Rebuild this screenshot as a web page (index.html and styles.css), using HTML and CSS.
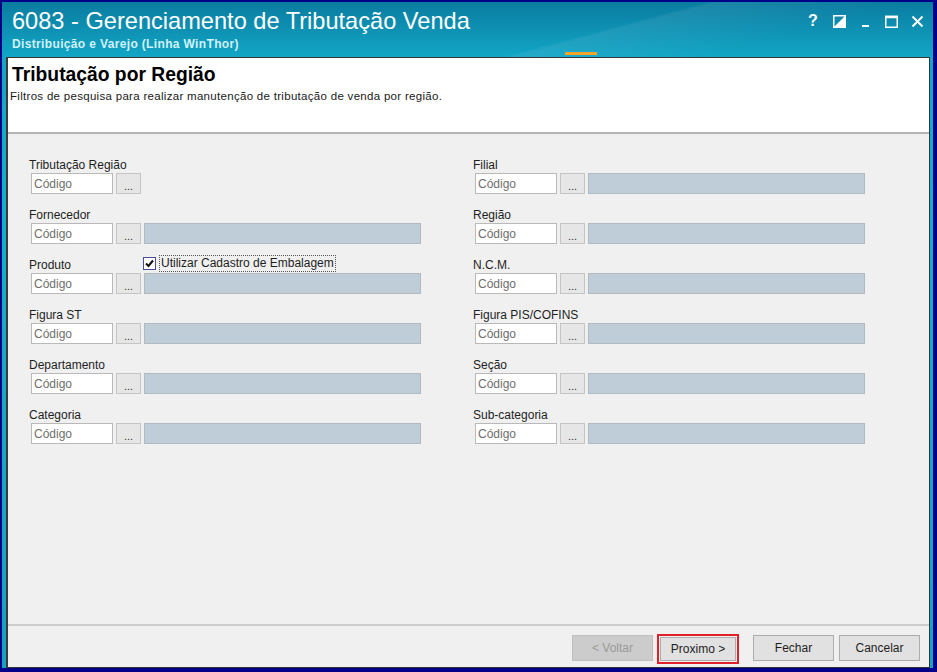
FILE: index.html
```html
<!DOCTYPE html>
<html lang="pt-BR">
<head>
<meta charset="UTF-8">
<meta name="viewport" content="width=device-width, initial-scale=1.0">
<title>6083 - Gerenciamento de Tributação Venda</title>
<link rel="stylesheet" href="styles.css">
</head>
<body>
<div class="window">
  <div class="frame">
    <!-- Title bar -->
    <div class="titlebar">
      <div class="titles">
        <div class="app-title">6083 - Gerenciamento de Tributação Venda</div>
        <div class="app-subtitle">Distribuição e Varejo (Linha WinThor)</div>
      </div>
      <div class="win-controls">
        <span class="ctl ctl-help">?</span>
        <span class="ctl">
          <svg width="13" height="13" viewBox="0 0 13 13">
            <rect x="0.75" y="0.75" width="11.5" height="11.5" fill="none" stroke="#fff" stroke-width="1.5"/>
            <polygon points="12,1 12,12 1,12" fill="#fff"/>
          </svg>
        </span>
        <span class="ctl">
          <svg width="13" height="13" viewBox="0 0 13 13">
            <rect x="3" y="10" width="7" height="2" fill="#fff"/>
          </svg>
        </span>
        <span class="ctl">
          <svg width="13" height="13" viewBox="0 0 13 13">
            <rect x="0.75" y="1.5" width="11.5" height="10.75" fill="none" stroke="#fff" stroke-width="1.5"/>
            <rect x="0" y="0.75" width="13" height="2.5" fill="#fff"/>
          </svg>
        </span>
        <span class="ctl">
          <svg width="13" height="13" viewBox="0 0 13 13">
            <path d="M1.5 1.5 L11.5 11.5 M11.5 1.5 L1.5 11.5" stroke="#fff" stroke-width="2"/>
          </svg>
        </span>
      </div>
      <span class="tab-mark"></span>
    </div>

    <div class="client">
      <!-- Wizard header -->
      <div class="page-header">
        <h1>Tributação por Região</h1>
        <p>Filtros de pesquisa para realizar manutenção de tributação de venda por região.</p>
      </div>

      <!-- Filters -->
      <div class="filters">
        <div class="column">
          <div class="field">
            <label>Tributação Região</label>
            <div class="controls">
              <input class="code" type="text" placeholder="Código">
              <button class="pick">...</button>
            </div>
          </div>
          <div class="field">
            <label>Fornecedor</label>
            <div class="controls">
              <input class="code" type="text" placeholder="Código">
              <button class="pick">...</button>
              <span class="desc"></span>
            </div>
          </div>
          <div class="field">
            <div class="label-row">
              <label class="short">Produto</label>
              <span class="check">
                <svg width="13" height="13" viewBox="0 0 13 13">
                  <rect x="0.5" y="0.5" width="12" height="12" fill="#fff" stroke="#4b4b9a"/>
                  <path d="M3 6.5 L5.5 9 L10 3.5" fill="none" stroke="#111" stroke-width="2"/>
                </svg>
                <span class="check-text">Utilizar Cadastro de Embalagem</span>
              </span>
            </div>
            <div class="controls">
              <input class="code" type="text" placeholder="Código">
              <button class="pick">...</button>
              <span class="desc"></span>
            </div>
          </div>
          <div class="field">
            <label>Figura ST</label>
            <div class="controls">
              <input class="code" type="text" placeholder="Código">
              <button class="pick">...</button>
              <span class="desc"></span>
            </div>
          </div>
          <div class="field">
            <label>Departamento</label>
            <div class="controls">
              <input class="code" type="text" placeholder="Código">
              <button class="pick">...</button>
              <span class="desc"></span>
            </div>
          </div>
          <div class="field">
            <label>Categoria</label>
            <div class="controls">
              <input class="code" type="text" placeholder="Código">
              <button class="pick">...</button>
              <span class="desc"></span>
            </div>
          </div>
        </div>

        <div class="column">
          <div class="field">
            <label>Filial</label>
            <div class="controls">
              <input class="code" type="text" placeholder="Código">
              <button class="pick">...</button>
              <span class="desc"></span>
            </div>
          </div>
          <div class="field">
            <label>Região</label>
            <div class="controls">
              <input class="code" type="text" placeholder="Código">
              <button class="pick">...</button>
              <span class="desc"></span>
            </div>
          </div>
          <div class="field">
            <label>N.C.M.</label>
            <div class="controls">
              <input class="code" type="text" placeholder="Código">
              <button class="pick">...</button>
              <span class="desc"></span>
            </div>
          </div>
          <div class="field">
            <label>Figura PIS/COFINS</label>
            <div class="controls">
              <input class="code" type="text" placeholder="Código">
              <button class="pick">...</button>
              <span class="desc"></span>
            </div>
          </div>
          <div class="field">
            <label>Seção</label>
            <div class="controls">
              <input class="code" type="text" placeholder="Código">
              <button class="pick">...</button>
              <span class="desc"></span>
            </div>
          </div>
          <div class="field">
            <label>Sub-categoria</label>
            <div class="controls">
              <input class="code" type="text" placeholder="Código">
              <button class="pick">...</button>
              <span class="desc"></span>
            </div>
          </div>
        </div>
      </div>

      <!-- Wizard buttons -->
      <div class="footer">
        <button class="btn" disabled>&lt; Voltar</button>
        <span class="highlight"><button class="btn btn-next">Proximo &gt;</button></span>
        <button class="btn btn-close">Fechar</button>
        <button class="btn">Cancelar</button>
      </div>
    </div>
  </div>
</div>
</body>
</html>
```

FILE: styles.css
```css
html, body {
    margin: 0;
    padding: 0;
    overflow: hidden;
}

body {
    font-family: "Liberation Sans", Arial, sans-serif;
    font-size: 12px;
    color: #1e1e1e;
}

.window {
    width: 937px;
    height: 672px;
    box-sizing: border-box;
    background: #000088;
    padding: 2px 4px 4px 2px;
}

.frame {
    height: 100%;
    display: flex;
    flex-direction: column;
    background: linear-gradient(180deg, #0a7ca0 0px, #12a6c6 55px, #16aecb 200px, #14a4c2 100%);
}

/* title bar */
.titlebar {
    position: relative;
    height: 55px;
    flex: none;
    display: flex;
    padding-left: 10px;
    background: linear-gradient(165deg, rgba(255,255,255,0) 62%, rgba(255,255,255,0.07) 63%, rgba(255,255,255,0) 80%);
}

.app-title {
    margin-top: 5px;
    font-size: 23.6px;
    line-height: 28px;
    color: #fff;
    white-space: nowrap;
}

.app-subtitle {
    margin-top: 3px;
    font-size: 12px;
    line-height: 13px;
    font-weight: bold;
    letter-spacing: 0.35px;
    color: #d2f1fb;
}

.win-controls {
    margin-left: auto;
    padding-right: 3px;
    padding-top: 12px;
    display: flex;
    align-items: flex-start;
}

.ctl {
    width: 26px;
    height: 14px;
    display: flex;
    justify-content: center;
    align-items: center;
}

.ctl-help {
    font-size: 16px;
    font-weight: bold;
    color: #fff;
    line-height: 14px;
}

.tab-mark {
    position: absolute;
    left: 563px;
    top: 50px;
    width: 32px;
    height: 3px;
    background: #f2a42a;
}

/* client area */
.client {
    flex: 1;
    display: flex;
    flex-direction: column;
    margin: 0 3px 0 4px;
    border: 1px solid #353535;
    border-left: 2px solid #3a3a3a;
    background: #f0f0f0;
}

.page-header {
    height: 74px;
    flex: none;
    background: #fff;
    border-bottom: 2px solid #b4b4b4;
    padding-left: 4px;
}

.page-header h1 {
    margin: 6px 0 0 0;
    font-size: 19.3px;
    line-height: 22px;
    font-weight: bold;
    color: #000;
}

.page-header p {
    margin: 4px 0 0 -2px;
    font-size: 11.5px;
    line-height: 13px;
    letter-spacing: 0.3px;
    color: #1a1a1a;
}

/* filter grid */
.filters {
    flex: 1;
    display: grid;
    grid-template-columns: 392px 392px;
    column-gap: 52px;
    align-content: start;
    padding: 24px 0 0 21px;
}

.field {
    height: 50px;
}

.field label {
    display: block;
    height: 14px;
    line-height: 14px;
    margin-bottom: 1px;
    font-size: 12px;
    color: #1e1e1e;
}

.label-row {
    display: flex;
    align-items: flex-end;
    height: 14px;
    margin-bottom: 1px;
}

.label-row label.short {
    width: 114px;
    margin-bottom: 0;
}

.check {
    display: flex;
    align-items: center;
    gap: 3px;
}

.check svg {
    display: block;
}

.check-text {
    border: 1px dotted #555;
    padding: 0 1px;
    line-height: 15px;
    font-size: 12px;
    color: #1e1e1e;
}

.controls {
    display: flex;
    gap: 3px;
    height: 21px;
    margin-left: 2px;
}

.code {
    width: 82px;
    height: 21px;
    box-sizing: border-box;
    border: 1px solid #b9b9b9;
    background: #fff;
    padding: 0 2px;
    font-family: "Liberation Sans", Arial, sans-serif;
    font-size: 12px;
    outline: none;
}

.code::placeholder {
    color: #6e6e6e;
}

.pick {
    width: 25px;
    height: 21px;
    box-sizing: border-box;
    border: 1px solid #c4c4c4;
    background: #e6e6e6;
    padding: 4px 0 0 0;
    font-family: "Liberation Sans", Arial, sans-serif;
    font-size: 11px;
    color: #333;
    line-height: 12px;
}

.desc {
    width: 278px;
    height: 21px;
    box-sizing: border-box;
    border: 1px solid #b2b9c1;
    background: #bfcdd9;
}

/* footer buttons */
.footer {
    height: 43px;
    flex: none;
    box-sizing: border-box;
    border-top: 2px solid #cdcdcd;
    display: flex;
    align-items: flex-start;
    justify-content: flex-end;
    padding: 9px 9px 0 0;
}

.btn {
    height: 26px;
    width: 81px;
    box-sizing: border-box;
    border: 1px solid #adadad;
    background: #e1e1e1;
    font-family: "Liberation Sans", Arial, sans-serif;
    font-size: 12px;
    color: #1e1e1e;
    padding: 0;
}

.btn:disabled {
    background: #cccccc;
    border-color: #bfbfbf;
    color: #9a9a9a;
}

.highlight {
    margin: -1px 0 0 4px;
    border: 2px solid #e0202a;
    padding: 1px;
    display: flex;
}

.btn-next {
    width: 76px;
    height: 24px;
}

.btn-close {
    margin-left: 14px;
    margin-right: 5px;
}
```
